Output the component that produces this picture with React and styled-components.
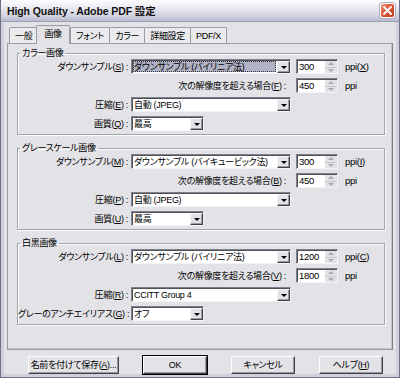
import React from 'react'
import styled, { createGlobalStyle, css } from 'styled-components'

const GlobalStyle = createGlobalStyle`
    html, body {
        margin: 0;
        padding: 0;
        background: #ffffff;
    }
    body {
        font-family: "Liberation Sans", "Noto Sans CJK JP", sans-serif;
        font-size: 9px;
        font-feature-settings: "palt";
        letter-spacing: -0.3px;
        color: #000;
    }
    * {
        box-sizing: border-box;
    }
`

const Window = styled.div`
    width: 400px;
    height: 378px;
    display: flex;
    flex-direction: column;
    background: #cfd0dc;
    border: 1px solid #6f7087;
    border-top: none;
    padding: 0 3px 3px;
`

const TitleBar = styled.div`
    height: 22px;
    margin: 0 -3px;
    display: flex;
    align-items: center;
    justify-content: space-between;
    padding: 0 4px 0 6px;
    background: linear-gradient(#fdfdff 0%, #e8e8f0 40%, #d2d3e0 75%, #b9bacb 100%);
    border-bottom: 1px solid #9c9db2;
`

const Title = styled.span`
    font-weight: bold;
    font-size: 10.5px;
    letter-spacing: -0.1px;
    color: #111;
`

const CloseButton = styled.div`
    width: 15px;
    height: 15px;
    border-radius: 3px;
    border: 1px solid #ffffff;
    box-shadow: 0 0 0 1px #b0b0c0;
    background: linear-gradient(135deg, #f0937a 0%, #d9573a 45%, #c13a1e 100%);
    display: flex;
    align-items: center;
    justify-content: center;
`

const Body = styled.div`
    flex: 1;
    display: flex;
    flex-direction: column;
    background: #e3e3e7;
    padding: 3px 3px 0;
`

const TabRow = styled.div`
    display: flex;
    align-items: flex-end;
    height: 18px;
    padding-left: 2px;
    position: relative;
    z-index: 1;
`

const Tab = styled.div`
    height: 16px;
    padding: 0 5px;
    display: flex;
    align-items: center;
    line-height: 12px;
    white-space: nowrap;
    background: #ebebee;
    border: 1px solid #9b9ba3;
    border-bottom: none;
    border-radius: 2px 2px 0 0;
    margin-right: -1px;
    ${(p) =>
        p.active &&
        css`
            height: 19px;
            margin: 0 0 -1px -1px;
            padding: 0 7px 2px;
            background: #e3e3e7;
            position: relative;
            z-index: 2;
        `}
`

const Panel = styled.div`
    height: 307px;
    border: 1px solid #9b9ba3;
    border-right-color: #7d7d86;
    box-shadow: inset -1px -1px 0 #c4c4ca;
    padding: 3px 7px 0 9px;
    display: flex;
    flex-direction: column;
    gap: 7px;
`

const Group = styled.fieldset`
    margin: 0;
    padding: 0 0 3px;
    border: 1px solid #a4a4ac;
    box-shadow: 1px 1px 0 #fafafa, inset 1px 1px 0 #fafafa;
    display: flex;
    flex-direction: column;
    gap: 4px;
`

const Legend = styled.legend`
    margin-left: 2px;
    padding: 0 2px;
    line-height: 12px;
`

const Row = styled.div`
    display: grid;
    grid-template-columns: 113px 165px 48px 1fr;
    align-items: center;
    height: 15px;
    line-height: 12px;
`

const Label = styled.span`
    text-align: right;
    padding-right: ${(p) => p.pad || 3}px;
    white-space: nowrap;
    grid-column: ${(p) => (p.wide ? '1 / 3' : 'auto')};
`

const ComboBox = styled.div`
    width: ${(p) => p.width}px;
    height: 15px;
    display: flex;
    background: #ffffff;
    border: 1px solid;
    border-color: #80808a #f4f4f6 #f4f4f6 #80808a;
    box-shadow: inset 1px 1px 0 #505058;
`

const ComboText = styled.div`
    flex: 1;
    margin: 1px;
    padding-left: 1px;
    display: flex;
    align-items: center;
    white-space: nowrap;
    overflow: hidden;
    ${(p) =>
        p.focused &&
        css`
            background: #b0b2c6;
            outline: 1px dotted #333;
            outline-offset: -1px;
        `}
`

const ArrowButton = styled.div`
    width: 13px;
    margin: 1px 0 0;
    background: #e3e3e7;
    border: 1px solid;
    border-color: #f8f8f8 #404048 #404048 #f8f8f8;
    box-shadow: inset -1px -1px 0 #9a9aa2;
    display: flex;
    align-items: center;
    justify-content: center;
`

const Triangle = styled.span`
    width: 0;
    height: 0;
    border-left: 3px solid transparent;
    border-right: 3px solid transparent;
    border-top: 3px solid ${(p) => p.color || '#000'};
    ${(p) =>
        p.up &&
        css`
            border-top: none;
            border-bottom: 3px solid ${p.color || '#000'};
        `}
`

const SpinBox = styled.div`
    width: 42px;
    height: 15px;
    display: flex;
    background: #ffffff;
    border: 1px solid;
    border-color: #80808a #f4f4f6 #f4f4f6 #80808a;
    box-shadow: inset 1px 1px 0 #505058;
`

const SpinText = styled.div`
    flex: 1;
    padding: 1px 0 0 2px;
    display: flex;
    align-items: center;
    font-size: 9.5px;
`

const SpinButtons = styled.div`
    width: 12px;
    margin-top: 1px;
    display: flex;
    flex-direction: column;
    background: #e3e3e7;
`

const SpinHalf = styled.div`
    flex: 1;
    display: flex;
    align-items: center;
    justify-content: center;
    border-bottom: ${(p) => (p.top ? '1px solid #c6c6cc' : 'none')};
`

const Unit = styled.span`
    padding-left: 1px;
    font-size: 9.5px;
`

const Footer = styled.div`
    display: flex;
    gap: 24px;
    padding: 6px 0 0 21px;
`

const Button = styled.div`
    width: ${(p) => p.width || 64}px;
    height: 18px;
    display: flex;
    align-items: center;
    justify-content: center;
    white-space: nowrap;
    line-height: 12px;
    background: #e3e3e7;
    border: 1px solid;
    border-color: #fdfdfd #404048 #404048 #fdfdfd;
    box-shadow: inset -1px -1px 0 #9a9aa2;
    ${(p) =>
        p.primary &&
        css`
            outline: 1px solid #000;
        `}
`

const Combo = ({ width = 160, focused, children }) => (
    <ComboBox width={width}>
        <ComboText focused={focused}>{children}</ComboText>
        <ArrowButton>
            <Triangle />
        </ArrowButton>
    </ComboBox>
)

const Spin = ({ value }) => (
    <SpinBox>
        <SpinText>{value}</SpinText>
        <SpinButtons>
            <SpinHalf top>
                <Triangle up color="#a8a8b0" />
            </SpinHalf>
            <SpinHalf>
                <Triangle color="#a8a8b0" />
            </SpinHalf>
        </SpinButtons>
    </SpinBox>
)

const groups = [
    {
        title: 'カラー画像',
        down: ['S', 'ダウンサンプル (バイリニア法)', '300', 'X'],
        over: ['F', '450'],
        comp: ['E', '自動 (JPEG)'],
        last: ['画質', 'Q', '最高'],
        focused: true,
    },
    {
        title: 'グレースケール画像',
        down: ['M', 'ダウンサンプル (バイキュービック法)', '300', 'I'],
        over: ['B', '450'],
        comp: ['P', '自動 (JPEG)'],
        last: ['画質', 'U', '最高'],
    },
    {
        title: '白黒画像',
        down: ['L', 'ダウンサンプル (バイリニア法)', '1200', 'C'],
        over: ['V', '1800'],
        comp: ['R', 'CCITT Group 4'],
        last: ['グレーのアンチエイリアス', 'G', 'オフ'],
    },
]

const ImageGroup = ({ g }) => (
    <Group>
        <Legend>{g.title}</Legend>
        <Row>
            <Label>
                ダウンサンプル(<u>{g.down[0]}</u>) :
            </Label>
            <Combo focused={g.focused}>{g.down[1]}</Combo>
            <Spin value={g.down[2]} />
            <Unit>
                ppi(<u>{g.down[3]}</u>)
            </Unit>
        </Row>
        <Row>
            <Label wide pad={10}>
                次の解像度を超える場合(<u>{g.over[0]}</u>) :
            </Label>
            <Spin value={g.over[1]} />
            <Unit>ppi</Unit>
        </Row>
        <Row>
            <Label>
                圧縮(<u>{g.comp[0]}</u>) :
            </Label>
            <Combo>{g.comp[1]}</Combo>
        </Row>
        <Row>
            <Label>
                {g.last[0]}(<u>{g.last[1]}</u>) :
            </Label>
            <Combo width={73}>{g.last[2]}</Combo>
        </Row>
    </Group>
)

const CloseIcon = () => (
    <svg width="9" height="9" viewBox="0 0 9 9">
        <path d="M1 1 L8 8 M8 1 L1 8" stroke="#fff" strokeWidth="1.8" strokeLinecap="round" />
    </svg>
)

const App = () => (
    <>
        <GlobalStyle />
        <Window>
            <TitleBar>
                <Title>High Quality - Adobe PDF 設定</Title>
                <CloseButton>
                    <CloseIcon />
                </CloseButton>
            </TitleBar>
            <Body>
                <TabRow>
                    <Tab>一般</Tab>
                    <Tab active>画像</Tab>
                    <Tab>フォント</Tab>
                    <Tab>カラー</Tab>
                    <Tab>詳細設定</Tab>
                    <Tab>PDF/X</Tab>
                </TabRow>
                <Panel>
                    {groups.map((g) => (
                        <ImageGroup key={g.title} g={g} />
                    ))}
                </Panel>
                <Footer>
                    <Button width={91}>
                        名前を付けて保存(<u>A</u>)...
                    </Button>
                    <Button primary>OK</Button>
                    <Button>キャンセル</Button>
                    <Button>
                        ヘルプ(<u>H</u>)
                    </Button>
                </Footer>
            </Body>
        </Window>
    </>
)

export default App
